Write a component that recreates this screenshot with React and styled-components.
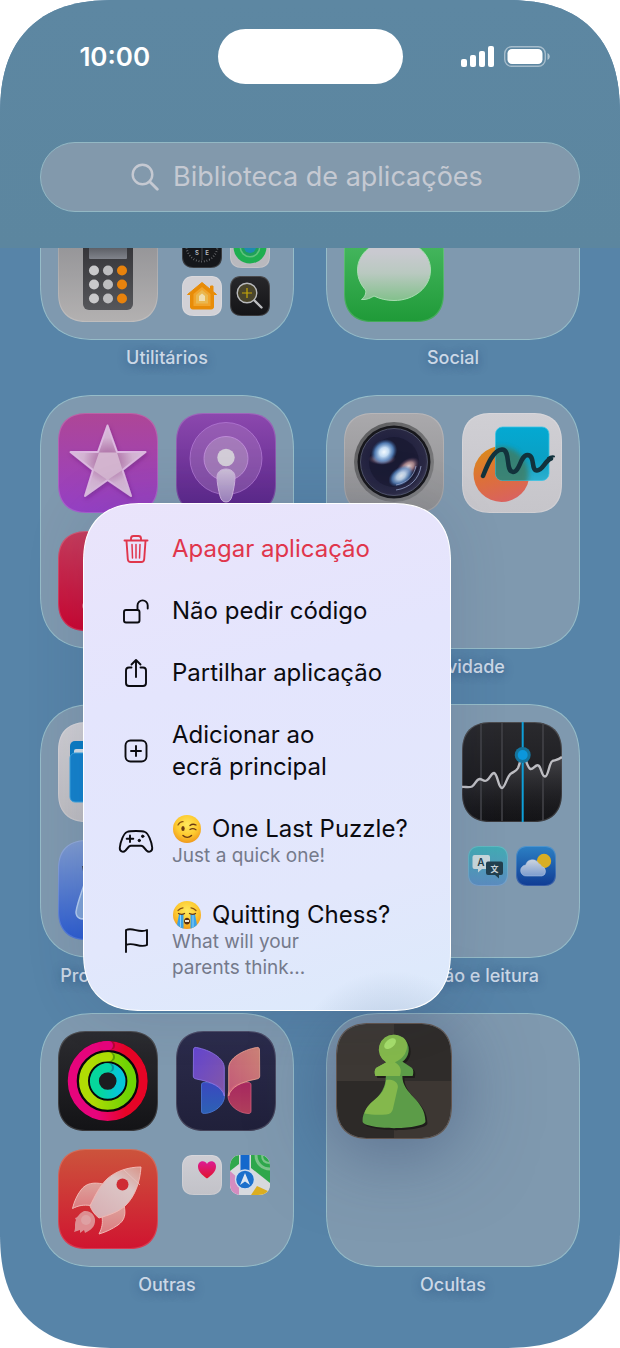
import React from "react";
import styled, { createGlobalStyle, css } from "styled-components";

const GlobalStyle = createGlobalStyle`
  * {
    box-sizing: border-box;
  }

  body {
    margin: 0;
    background: #fff;
    font-family: Inter, "Liberation Sans", sans-serif;
  }

  button {
    padding: 0;
    border: 0;
    background: none;
    color: inherit;
    font: inherit;
    text-align: left;
    cursor: pointer;
  }

  svg {
    display: block;
  }
`;

/* ---------- app icons, 100 x 100 ---------- */

const Calculator = () => (
  <svg viewBox="0 0 100 100" aria-hidden="true">
    <defs>
      <linearGradient id="calcBody" x1="0" y1="0" x2="0" y2="1">
        <stop offset="0" stopColor="#2f2f33" />
        <stop offset="1" stopColor="#55565a" />
      </linearGradient>
      <linearGradient id="calcScreen" x1="0" y1="0" x2="0" y2="1">
        <stop offset="0" stopColor="#44464c" />
        <stop offset="1" stopColor="#80838b" />
      </linearGradient>
    </defs>
    <rect x="25" y="12" width="50" height="76" rx="6" fill="url(#calcBody)" />
    <rect x="31" y="18" width="38" height="19" rx="1" fill="url(#calcScreen)" />
    {[48.5, 62.5, 76.5].map((y) => (
      <g key={y}>
        <circle cx="36" cy={y} r="5" fill="#c9c9cb" />
        <circle cx="50" cy={y} r="5" fill="#bdbdbf" />
        <circle cx="64" cy={y} r="5" fill="#e8820c" />
      </g>
    ))}
  </svg>
);

const Messages = () => (
  <svg viewBox="0 0 100 100" aria-hidden="true">
    <defs>
      <linearGradient id="bubble" x1="0" y1="0" x2="0" y2="1">
        <stop offset="0.2" stopColor="#c9c9d0" />
        <stop offset="0.55" stopColor="#b9c9c0" />
        <stop offset="1" stopColor="#83c08c" />
      </linearGradient>
    </defs>
    <path
      d="M50 18c-20 0-36.500 13-36.500 30 0 9 4 15.500 8 20 1 4-1 7-4 9.500 5 .5 9-1.500 12.500-3.500 6 3 13 4.500 20 4.500 20 0 36.500-13 36.500-30.500S70 18 50 18z"
      fill="url(#bubble)"
      stroke="#a9dcb2"
      strokeWidth="1"
    />
  </svg>
);

const Star = () => (
  <svg viewBox="0 0 100 100" aria-hidden="true">
    <defs>
      <radialGradient id="starArm" cx="0.5" cy="0.5" r="0.55">
        <stop offset="0.25" stopColor="#b47cae" />
        <stop offset="0.6" stopColor="#d3b3d2" />
        <stop offset="1" stopColor="#d9c2dc" />
      </radialGradient>
      <filter id="starShadow" x="-20%" y="-20%" width="140%" height="140%">
        <feDropShadow dx="1" dy="2" stdDeviation="2" floodColor="#5a1a6a" floodOpacity="0.4" />
      </filter>
    </defs>
    <path
      d="M49.500 12.500l9.500 26.500h28.500L64.500 57 73 83 49.500 67 27 83l8-26-22.500-18H40z"
      fill="url(#starArm)"
      stroke="#dcb8e0"
      strokeWidth="2"
      strokeLinejoin="round"
      filter="url(#starShadow)"
    />
    <path d="M41 39.500h18l5.500 17.500L49.500 67 35 57z" fill="#d4b5d0" />
  </svg>
);

const Podcasts = () => (
  <svg viewBox="0 0 100 100" aria-hidden="true">
    <defs>
      <linearGradient id="podBody" x1="0" y1="0" x2="0" y2="1">
        <stop offset="0" stopColor="#cdbfd8" />
        <stop offset="1" stopColor="#a184c0" />
      </linearGradient>
    </defs>
    <circle cx="50" cy="45.500" r="36" fill="#b07fc4" fillOpacity="0.4" stroke="#b77fd8" strokeOpacity="0.7" />
    <circle cx="50" cy="45.500" r="22" fill="#b79cc4" fillOpacity="0.5" stroke="#c795e0" strokeOpacity="0.8" />
    <path
      d="M41 64c0-5 4-8 9-8s9 3 9 8c0 6-1.500 13-3 19-1 4-3 6-6 6s-5-2-6-6c-1.500-6-3-13-3-19z"
      fill="url(#podBody)"
      stroke="#cfb2de"
    />
    <circle cx="50" cy="44.500" r="8.700" fill="#d3cdd8" />
  </svg>
);

const Music = () => (
  <svg viewBox="0 0 100 100" aria-hidden="true">
    <path
      d="M41 28l33-7v44a9.500 9.500 0 1 1-6-9V38l-21 4.500V75a11 10 0 1 1-6-9z"
      fill="#e28a9c"
      stroke="#eeb0bc"
      strokeWidth="1"
    />
  </svg>
);

const Camera = () => (
  <svg viewBox="0 0 100 100" aria-hidden="true">
    <defs>
      <linearGradient id="lensRing" x1="0" y1="0" x2="1" y2="1">
        <stop offset="0" stopColor="#5a5a5c" />
        <stop offset="1" stopColor="#838385" />
      </linearGradient>
      <radialGradient id="lens" cx="0.45" cy="0.45" r="0.6">
        <stop offset="0" stopColor="#20223c" />
        <stop offset="0.55" stopColor="#22223f" />
        <stop offset="0.85" stopColor="#2a2944" />
        <stop offset="1" stopColor="#3f3d58" />
      </radialGradient>
      <radialGradient id="glint">
        <stop offset="0" stopColor="#f4faff" />
        <stop offset="0.35" stopColor="#c4dcf4" />
        <stop offset="0.7" stopColor="#5f93d0" stopOpacity="0.8" />
        <stop offset="1" stopColor="#3667a8" stopOpacity="0" />
      </radialGradient>
      <radialGradient id="glow">
        <stop offset="0" stopColor="#f4e0dc" />
        <stop offset="0.5" stopColor="#c49a9c" stopOpacity="0.8" />
        <stop offset="1" stopColor="#5a3d60" stopOpacity="0" />
      </radialGradient>
    </defs>
    <circle cx="50" cy="49" r="40" fill="url(#lensRing)" />
    <circle cx="50" cy="49" r="36.500" fill="#17171c" />
    <circle cx="50" cy="49" r="33.500" fill="url(#lens)" stroke="#5a6076" strokeWidth="0.8" />
    <circle cx="50" cy="49" r="25" fill="#14142a" opacity="0.5" />
    <ellipse cx="38" cy="46" rx="14" ry="6" fill="url(#glow)" opacity="0.8" />
    <ellipse cx="40" cy="39" rx="14" ry="12" fill="url(#glint)" transform="rotate(-40 40 39)" />
    <ellipse cx="64" cy="54" rx="13" ry="8" fill="url(#glow)" transform="rotate(-35 64 54)" />
    <ellipse cx="57" cy="63" rx="14" ry="9" fill="url(#glint)" opacity="0.9" transform="rotate(-35 57 63)" />
    <path d="M52 77c14-2 23-11 25-24M52 72c11-2 18-9 20-19" fill="none" stroke="#a8b8e0" strokeOpacity="0.7" />
  </svg>
);

const Freeform = () => (
  <svg viewBox="0 0 100 100" aria-hidden="true">
    <defs>
      <linearGradient id="freeDot" x1="0.3" y1="0" x2="0.6" y2="1">
        <stop offset="0" stopColor="#d98a1a" />
        <stop offset="0.5" stopColor="#dd7038" />
        <stop offset="1" stopColor="#d96260" />
      </linearGradient>
      <linearGradient id="freeSquare" x1="0" y1="0" x2="0" y2="1">
        <stop offset="0" stopColor="#04a9d2" />
        <stop offset="0.6" stopColor="#0aa0c4" />
        <stop offset="1" stopColor="#2eb0cf" />
      </linearGradient>
      <clipPath id="freeOverlap">
        <rect x="33.500" y="14" width="53.500" height="53.500" rx="7" />
      </clipPath>
      <filter id="soft">
        <feGaussianBlur stdDeviation="2.5" />
      </filter>
    </defs>
    <circle cx="39.500" cy="61" r="28" fill="url(#freeDot)" />
    <rect x="33.500" y="14" width="53.500" height="53.500" rx="7" fill="url(#freeSquare)" stroke="#3cc4e4" strokeWidth="0.8" />
    <g clipPath="url(#freeOverlap)">
      <circle cx="39.500" cy="61" r="27" fill="#3f7a5e" opacity="0.8" filter="url(#soft)" />
    </g>
    <path
      d="M21 63C25 53 31 37 40 36.500c9 0 3 22 11 22.500 7 0 7-16.500 14.500-17 8 0 3 15.500 9.500 15.500 6 0 8-10 14-12"
      fill="none"
      stroke="#12323c"
      strokeWidth="4.500"
      strokeLinecap="round"
      strokeLinejoin="round"
    />
    <path d="M86 45c2-1.500 4-2 6-1.500" fill="none" stroke="#12323c" strokeWidth="2" strokeLinecap="round" />
  </svg>
);

const Files = () => (
  <svg viewBox="0 0 100 100" aria-hidden="true">
    <rect x="12" y="19" width="76" height="40" rx="5" fill="#0a7cc4" />
    <rect x="16" y="27" width="68" height="10" rx="2" fill="#d3dde6" />
    <rect x="12" y="31" width="76" height="49" rx="5" fill="#1482cc" stroke="#3aa3e0" />
  </svg>
);

const TestFlight = () => (
  <svg viewBox="0 0 100 100" aria-hidden="true">
    <path d="M24 26h10l3 20-9 2z" fill="#3b4454" />
    <path
      d="M27 42c-4 12-8 22-9 30 0 6 6 9 11 5l21-27z"
      fill="#7fa3d8"
      stroke="#b4cdf0"
      strokeWidth="1.500"
    />
    <circle cx="50" cy="50" r="9" fill="#c3d2ec" />
  </svg>
);

const Stocks = () => (
  <svg viewBox="0 0 100 100" aria-hidden="true">
    <defs>
      <linearGradient id="stockFill" x1="0" y1="0" x2="0" y2="1">
        <stop offset="0" stopColor="#56565b" />
        <stop offset="1" stopColor="#1a1a1e" stopOpacity="0" />
      </linearGradient>
    </defs>
    <path
      d="M0 65c3-.5 7 1 10-.5 3-1.500 4-7 7.500-7.500 3 0 4 3 7 1.500C28 57 29 51 32 51c4 1 4 15 8 15 3 0 5-12 9-14.500 3-2 5-2 7-5.500 2-4 3-13 5-13s4 13 7.500 14c3 .5 5-5 8-3.500 3 2 3 11 6.500 11s4-14 7.500-15.500c3-1 6-1 9.500-4V100H0z"
      fill="url(#stockFill)"
      opacity="0.7"
    />
    <path d="M19 1v98M40 1v98M81 1v98" stroke="#45454a" strokeWidth="1.500" />
    <path
      d="M0 65c3-.5 7 1 10-.5 3-1.500 4-7 7.500-7.500 3 0 4 3 7 1.500C28 57 29 51 32 51c4 1 4 15 8 15 3 0 5-12 9-14.500 3-2 5-2 7-5.500 2-4 3-13 5-13s4 13 7.500 14c3 .5 5-5 8-3.500 3 2 3 11 6.500 11s4-14 7.500-15.500c3-1 6-1 9.500-4"
      fill="none"
      stroke="#bdbdc2"
      strokeWidth="2.400"
    />
    <path d="M60.700 0v100" stroke="#0e9fd8" strokeWidth="2" />
    <circle cx="60.700" cy="33" r="8" fill="#15749c" />
    <circle cx="60.700" cy="33" r="5" fill="#0b97dc" />
  </svg>
);

const Activity = () => (
  <svg viewBox="0 0 100 100" aria-hidden="true">
    <defs>
      <linearGradient id="ringMove">
        <stop offset="0.35" stopColor="#e6047c" />
        <stop offset="0.75" stopColor="#e60426" />
      </linearGradient>
      <linearGradient id="ringExercise">
        <stop offset="0.2" stopColor="#b0dc04" />
        <stop offset="0.9" stopColor="#6ed404" />
      </linearGradient>
      <linearGradient id="ringStand">
        <stop offset="0.2" stopColor="#06d69c" />
        <stop offset="0.9" stopColor="#06c6d8" />
      </linearGradient>
    </defs>
    <circle cx="49.700" cy="50" r="40" fill="#08080a" />
    <circle cx="49.700" cy="50" r="9" fill="#1c1c20" />
    <g fill="none" strokeWidth="9">
      <circle cx="49.700" cy="50" r="35.500" stroke="url(#ringMove)" />
      <circle cx="49.700" cy="50" r="24.200" stroke="url(#ringExercise)" />
      <circle cx="49.700" cy="50" r="13.300" stroke="url(#ringStand)" />
    </g>
    <g fill="none" strokeWidth="8" strokeLinecap="round">
      <path d="M51 14.600h2" stroke="#8d0a22" strokeOpacity="0.6" />
      <path d="M51 25.900h2" stroke="#3c7a08" strokeOpacity="0.6" />
      <path d="M50 36.800h2" stroke="#0a6a88" strokeOpacity="0.6" />
    </g>
    <g fill="none" strokeWidth="9" strokeLinecap="round">
      <path d="M46 14.700c2-.2 3-.2 4.500-.2" stroke="#e6047c" />
      <path d="M46 26.100c2-.3 3-.3 4.500-.3" stroke="#aede04" />
      <path d="M48 36.800l1.500-.1" stroke="#06d6a4" />
    </g>
  </svg>
);

const Journal = () => (
  <svg viewBox="0 0 100 100" aria-hidden="true">
    <defs>
      <linearGradient id="wingA" x1="0" y1="0" x2="1" y2="1">
        <stop offset="0" stopColor="#6848dc" />
        <stop offset="1" stopColor="#8c5cae" />
      </linearGradient>
      <linearGradient id="wingB" x1="0" y1="1" x2="1" y2="0">
        <stop offset="0" stopColor="#cf5c7c" />
        <stop offset="1" stopColor="#dc8c7c" />
      </linearGradient>
      <linearGradient id="wingC" x1="0" y1="0" x2="0" y2="1">
        <stop offset="0" stopColor="#3a48c0" />
        <stop offset="1" stopColor="#2c62b4" />
      </linearGradient>
      <linearGradient id="wingD" x1="0" y1="0" x2="0" y2="1">
        <stop offset="0" stopColor="#a82860" />
        <stop offset="1" stopColor="#b0405c" />
      </linearGradient>
    </defs>
    <path d="M25.500 54c0-2 1-2.500 3-2.500 11 0 20 5 20 13.500 0 9-10 17-20 17.500-2 0-3-.5-3-2.500z" fill="url(#wingC)" stroke="#4e78d8" strokeWidth="0.800" />
    <path d="M75 54c0-2-1-2.500-3-2.500-11 0-20 5-20 13.500 0 9 10 17 20 17.500 2 0 3-.5 3-2.500z" fill="url(#wingD)" stroke="#d0607c" strokeWidth="0.800" />
    <path d="M17.500 19c0-2 1-3 3-2.500C34 19 48.300 27 48.300 37v28c-2-9-12-14-28-17-2-.5-3-1-3-3z" fill="url(#wingA)" fillOpacity="0.920" stroke="#9078ec" strokeWidth="0.800" />
    <path d="M83.500 19c0-2-1-3-3-2.500C67 19 52.700 27 52.700 37v28c2-9 12-14 28-17 2-.5 3-1 3-3z" fill="url(#wingB)" fillOpacity="0.920" stroke="#eca694" strokeWidth="0.800" />
  </svg>
);

const Rocket = () => (
  <svg viewBox="0 0 100 100" aria-hidden="true">
    <defs>
      <linearGradient id="hull" x1="0.900" y1="0" x2="0.200" y2="1">
        <stop offset="0" stopColor="#d89a90" />
        <stop offset="0.35" stopColor="#dcc6c6" />
        <stop offset="1" stopColor="#d8b0b4" />
      </linearGradient>
      <linearGradient id="fin" x1="0" y1="0" x2="0" y2="1">
        <stop offset="0" stopColor="#dda29c" />
        <stop offset="1" stopColor="#dc7c80" />
      </linearGradient>
    </defs>
    <g stroke="#f0b8b4" strokeWidth="1" strokeLinejoin="round">
      <path d="M45 35c-9-2-17-1-22 6-4 5-7 12-8.500 18.500 6-3 11-4 18-3z" fill="url(#fin)" />
      <path d="M66 56c2 9 1 15-6 20-6 4-12 7-19 9 3-6 4-11 3-17z" fill="url(#fin)" />
      <path d="M83 18c-13 0-25 4-34 12-8 8-12 17-17 27 2 5 5 9 9 12 10-3 20-6 27-13 9-9 14-23 15-38z" fill="url(#hull)" />
    </g>
    <path d="M66 21l16 15" stroke="#e4c4c0" strokeWidth="0.800" />
    <circle cx="64.500" cy="35.500" r="6" fill="#cf2c34" />
    <path
      d="M26 62c7-1 12 5 11 11-1 7-7 9-10 11l-1-3-4 3v-3l-6 2c2-4 0-8 2-12l-1-2c3 0 4-5 9-7z"
      fill="#dfa0a2"
      fillOpacity="0.850"
    />
    <circle cx="28" cy="71" r="5" fill="#e0b4b6" fillOpacity="0.500" />
  </svg>
);

/* drawn larger: this one is lifted under the menu */
const Chess = () => (
  <svg viewBox="0 0 116 116" aria-hidden="true">
    <rect width="58" height="58" fill="#3d3834" />
    <rect x="58" width="58" height="58" fill="#2f2c2a" />
    <rect y="58" width="58" height="58" fill="#2d2a28" />
    <rect x="58" y="58" width="58" height="58" fill="#3d3733" />
    <g fill="#1f1d1b" transform="translate(2 2)">
      <circle cx="58" cy="26" r="15" />
      <path d="M51 39l-11 5.500c-2 1.500-2 5-1 8.500h10.700c0 25-23.700 26-23.700 46 0 5 20 7 32 7s32-2 32-7c0-22-23.500-27-23.500-46H77c1-3.500 1-7-1-8.500L66 38z" />
    </g>
    <path
      d="M51 39l-11 5.500c-2 1.500-2 5-1 8.500h10.700c0 25-23.700 26-23.700 46 0 5 20 7 32 7s32-2 32-7c0-22-23.500-27-23.500-46H77c1-3.500 1-7-1-8.500L66 38z"
      fill="#5c9c48"
    />
    <circle cx="58" cy="26" r="15" fill="#5c9c48" />
    <path d="M58 11a15 15 0 0 0-8 28l-10 5.500c-2 1.500-2 5-1 8.500h25c2-6 1-10-5-14 15-6 16-24 5-26.500-2-1-4-1.500-6-1.500z" fill="#84b84c" />
    <path d="M50 57c3-1 12 0 12 7l-5 22c-1 4-3 6-7 6-7 .5-15 .5-22-1 4-15 20-14 22-34z" fill="#84b84c" />
    <ellipse cx="54" cy="20" rx="7" ry="4.200" fill="#a6de6c" transform="rotate(-40 54 20)" />
  </svg>
);

/* ---------- mini icons, 40 x 40 ---------- */

const Compass = () => (
  <svg viewBox="0 0 40 40" aria-hidden="true">
    <circle cx="20" cy="18" r="15.500" fill="none" stroke="#8b8d90" strokeWidth="2" strokeDasharray="0.6 2.100" />
    <path d="M20 6v26" stroke="#55585c" strokeWidth="0.800" />
    <g fill="#b8bcc0" fontFamily="Inter, sans-serif" fontSize="6" fontWeight="600" textAnchor="middle">
      <text x="15" y="27">S</text>
      <text x="25" y="27">E</text>
    </g>
  </svg>
);

const FindMy = () => (
  <svg viewBox="0 0 40 40" aria-hidden="true">
    <circle cx="20" cy="19" r="16.500" fill="#1fae50" />
    <circle cx="20" cy="19" r="10.500" fill="#5fc27c" />
    <circle cx="20" cy="19" r="9" fill="#1fa05a" />
    <circle cx="20" cy="19" r="6" fill="#1d8bb0" />
  </svg>
);

const Home = () => (
  <svg viewBox="0 0 40 40" aria-hidden="true">
    <path d="M20 6.500L5.500 18.500h3V31q0 2 2 2h19q2 0 2-2V18.500h3L31 15.500V10h-2.500v3.500z" fill="#e88c08" stroke="#e88c08" strokeLinejoin="round" />
    <path d="M20 11l-8.500 7v12h17V18z" fill="#f0a42c" />
    <path d="M20 14l-6 5v8.500h12V19z" fill="#eab850" />
    <path d="M20 17.500l-3 2.500v5h6v-5z" fill="#f0deb0" />
  </svg>
);

const Magnifier = () => (
  <svg viewBox="0 0 40 40" aria-hidden="true">
    <circle cx="17" cy="17" r="9.800" fill="#4a452c" stroke="#b8b9bc" strokeWidth="1.400" />
    <path d="M17 12v10M12 17h10" stroke="#c8a808" strokeWidth="1.200" />
    <path d="M24.500 24.500l7 7" stroke="#bcbdc0" strokeWidth="2.400" strokeLinecap="round" />
  </svg>
);

const Translate = () => (
  <svg viewBox="0 0 40 40" aria-hidden="true">
    <path d="M6.500 9H20q2 0 2 2v10q0 2-2 2h-6l-4 3.500V23H6.500q-2 0-2-2V11q0-2 2-2z" fill="#c9d8dc" />
    <path d="M20 15.500h13q2 0 2 2V27q0 2-2 2h-2v3.500L27 29h-7q-2 0-2-2v-9.500q0-2 2-2z" fill="#22404e" />
    <text x="13" y="20" fill="#24404c" fontFamily="Inter, sans-serif" fontSize="10" fontWeight="600" textAnchor="middle">A</text>
    <text x="26.500" y="25.500" fill="#c8d4da" fontFamily="'Noto Sans CJK JP', sans-serif" fontSize="8" fontWeight="700" textAnchor="middle">文</text>
  </svg>
);

const Weather = () => (
  <svg viewBox="0 0 40 40" aria-hidden="true">
    <defs>
      <linearGradient id="cloud" x1="0" y1="0" x2="0" y2="1">
        <stop offset="0" stopColor="#ccd4e0" />
        <stop offset="1" stopColor="#7c9cce" />
      </linearGradient>
    </defs>
    <circle cx="28" cy="15" r="7.200" fill="#d8ae24" />
    <path d="M10.500 30a5.500 5.500 0 0 1-.8-11 7 7 0 0 1 13-1.500 5.200 5.200 0 0 1 3 3A4.900 4.900 0 0 1 26 30z" fill="url(#cloud)" stroke="#b4c6e2" strokeWidth="0.500" />
  </svg>
);

const Health = () => (
  <svg viewBox="0 0 40 40" aria-hidden="true">
    <defs>
      <linearGradient id="heart" x1="0" y1="0" x2="0" y2="1">
        <stop offset="0" stopColor="#dc1c94" />
        <stop offset="1" stopColor="#e0142c" />
      </linearGradient>
    </defs>
    <path d="M25 23.500c-5-3.500-9-7-9-12 0-6 7-7 9-2.500 2-4.500 9-3.500 9 2.500 0 5-4 8.500-9 12z" fill="url(#heart)" />
  </svg>
);

const Maps = () => (
  <svg viewBox="0 0 40 40" aria-hidden="true">
    <rect width="40" height="40" fill="#d8dade" />
    <path d="M0 0h9v9L0 16z" fill="#2fa84c" />
    <path d="M21 0h19v28L21 13z" fill="#2fa84c" />
    <path d="M26 0c0 8 6 14 14 14" fill="none" stroke="#7cc48a" strokeWidth="3" />
    <path d="M32 0c0 5 3 8 8 8" fill="none" stroke="#7cc48a" strokeWidth="2" />
    <path d="M0 16l9 8v16H0z" fill="#d48cc0" />
    <path d="M21 40l6-9 13 6v3z" fill="#dcae20" />
    <path d="M10.500 0h9v16h-9z" fill="#1468cc" />
    <circle cx="15" cy="24.500" r="9.500" fill="#1c70cc" stroke="#d0dcec" strokeWidth="1.400" />
    <path d="M15 18l5 12-5-3.500-5 3.500z" fill="#dce6f2" />
  </svg>
);

/* ---------- menu and status drawings ---------- */

const MenuSvg = ({ children }) => (
  <svg
    width="36"
    height="36"
    viewBox="0 0 36 36"
    fill="none"
    stroke="currentColor"
    strokeWidth="1.900"
    strokeLinecap="round"
    strokeLinejoin="round"
    aria-hidden="true"
  >
    {children}
  </svg>
);

const TrashIcon = () => (
  <MenuSvg>
    <path d="M6.500 9.500h23" />
    <path d="M13 9V7.500Q13 5 15.500 5h5Q23 5 23 7.500V9" />
    <path d="M8.500 10l1.300 18.200q.2 2.800 3 2.800h10.400q2.800 0 3-2.800L27.500 10" />
    <path d="M14 13.500l.5 13.500M18 13.500V27M22 13.500L21.500 27" strokeWidth="1.500" />
  </MenuSvg>
);

const UnlockIcon = () => (
  <MenuSvg>
    <rect x="6" y="17" width="15.500" height="12.500" rx="2" />
    <path d="M19.500 16.500V12.500a5 5 0 0 1 10.200 0v3" />
  </MenuSvg>
);

const ShareIcon = () => (
  <MenuSvg>
    <path d="M13.500 12.500H11Q8 12.500 8 15.500V28q0 3 3 3h14q3 0 3-3V15.500q0-3-3-3h-2.500" />
    <path d="M18 22V5.500M13.500 9.500L18 5l4.500 4.500" />
  </MenuSvg>
);

const AddIcon = () => (
  <MenuSvg>
    <rect x="7.500" y="7.500" width="21" height="21" rx="5" />
    <path d="M18 13v10M13 18h10" />
  </MenuSvg>
);

const GamepadIcon = () => (
  <MenuSvg>
    <path d="M9 9c3-1.300 15-1.300 18 0 3.500 1.500 6.500 9.500 7.200 15.500.3 4-3.200 5.500-5.700 3L25 23.500c-.7-.6-1.200-.8-2-.8H13c-.8 0-1.300.2-2 .8l-3.500 4c-2.500 2.500-6 1-5.700-3C2.500 18.500 5.500 10.500 9 9z" />
    <path d="M12 12.500v6.500M8.700 15.700h6.600" />
    <circle cx="24.700" cy="13.300" r="1.200" fill="currentColor" strokeWidth="1" />
    <circle cx="21.300" cy="17.500" r="1.200" fill="currentColor" strokeWidth="1" />
  </MenuSvg>
);

const FlagIcon = () => (
  <MenuSvg>
    <path d="M8 30V8c7-3 13 3.500 21 0v15c-7 3.500-14-3.500-21 0" />
  </MenuSvg>
);

const WinkEmoji = () => (
  <svg width="30" height="30" viewBox="0 0 30 30" role="img" aria-label="Piscar o olho">
    <defs>
      <radialGradient id="winkFace" cx="0.5" cy="0.35" r="0.65">
        <stop offset="0" stopColor="#ffe95c" />
        <stop offset="0.6" stopColor="#fdc92f" />
        <stop offset="1" stopColor="#f09a1e" />
      </radialGradient>
    </defs>
    <circle cx="15" cy="15" r="14" fill="url(#winkFace)" />
    <ellipse cx="11" cy="14.500" rx="1.700" ry="2.500" fill="#6b3a12" />
    <path d="M6 11c1.500-2.500 3-3.500 5-3.300" fill="none" stroke="#8a5414" strokeWidth="1.300" strokeLinecap="round" />
    <path d="M18 11.500c2-1.700 4-1.500 6-.5M18 15.500c2-1.300 4-1 6 .2" fill="none" stroke="#6b3a12" strokeWidth="1.300" strokeLinecap="round" />
    <path d="M11 21.500c2.500 2.300 6 2.300 8.500 0" fill="none" stroke="#6b3a12" strokeWidth="1.500" strokeLinecap="round" />
  </svg>
);

const CryEmoji = () => (
  <svg width="30" height="30" viewBox="0 0 30 30" role="img" aria-label="A chorar muito">
    <defs>
      <radialGradient id="cryFace" cx="0.5" cy="0.35" r="0.65">
        <stop offset="0" stopColor="#ffe95c" />
        <stop offset="0.6" stopColor="#fdc92f" />
        <stop offset="1" stopColor="#f09a1e" />
      </radialGradient>
      <clipPath id="cryClip">
        <circle cx="15" cy="15" r="14" />
      </clipPath>
    </defs>
    <circle cx="15" cy="15" r="14" fill="url(#cryFace)" />
    <g clipPath="url(#cryClip)">
      <path d="M7 14h4.500v16H5V25zM18.500 14H23l2 11v5h-6.500z" fill="#3aa2e8" />
      <path d="M8.500 14v14M21 14v14" stroke="#8cd0f8" strokeWidth="1" />
    </g>
    <path d="M6 10.500C7.500 9 9 8 11 7.800M24 10.500C22.500 9 21 8 19 7.800" fill="none" stroke="#8a5414" strokeWidth="1.200" strokeLinecap="round" />
    <path d="M6.500 13.500c2 1 4.500 1 6 0M17.500 13.500c2 1 4.500 1 6 0" fill="none" stroke="#6b3a12" strokeWidth="1.300" strokeLinecap="round" />
    <path d="M12 21.500c0-5 6-5 6 0 0 4-6 4-6 0z" fill="#5a2c10" />
    <path d="M13 20h4v2h-4z" fill="#f6ead8" />
  </svg>
);

const SignalIcon = () => (
  <svg width="33" height="22" viewBox="0 0 33 22" fill="#fff" role="img" aria-label="Rede">
    <rect x="0" y="13" width="6" height="8" rx="2" />
    <rect x="9" y="9" width="6" height="12" rx="2" />
    <rect x="18" y="5" width="6" height="16" rx="2" />
    <rect x="27" y="0" width="6" height="21" rx="2" />
  </svg>
);

const BatteryIcon = () => (
  <svg width="46" height="22" viewBox="0 0 46 22" role="img" aria-label="Bateria">
    <rect x="0.700" y="0.700" width="40.600" height="19.600" rx="7" fill="none" stroke="#fff" strokeOpacity="0.450" strokeWidth="1.400" />
    <rect x="3.500" y="3" width="35" height="15" rx="4.500" fill="#fff" />
    <path d="M43.500 7c3 1.500 3 5.500 0 7z" fill="#fff" fillOpacity="0.500" />
  </svg>
);

const SearchIcon = () => (
  <svg width="28" height="28" viewBox="0 0 28 28" fill="none" stroke="currentColor" strokeWidth="2.400" strokeLinecap="round" aria-hidden="true">
    <circle cx="11.500" cy="11.500" r="9.800" />
    <path d="M18.800 18.800l7.500 7.500" strokeWidth="2.800" />
  </svg>
);

/* ---------- data ---------- */

const folders = [
  {
    label: "Utilitários",
    apps: [
      null,
      null,
      { name: "Calculadora", icon: <Calculator />, bg: "linear-gradient(#8d8d91, #b3b1b1)" },
    ],
    mini: [
      { name: "Bússola", icon: <Compass />, bg: "#15171b" },
      { name: "Encontrar", icon: <FindMy />, bg: "#b9b9be" },
      { name: "Casa", icon: <Home />, bg: "#d2d1d6" },
      { name: "Lupa", icon: <Magnifier />, bg: "linear-gradient(#28282b, #141417)" },
    ],
  },
  {
    label: "Social",
    apps: [null, null, { name: "Mensagens", icon: <Messages />, bg: "linear-gradient(#4fbe68, #1f9a38)" }],
  },
  {
    // the open menu lies over this folder's name
    label: "",
    apps: [
      { name: "iTunes Store", icon: <Star />, bg: "linear-gradient(#ae4696, #9640c6)" },
      { name: "Podcasts", icon: <Podcasts />, bg: "linear-gradient(#8c48ae, #582488)" },
      { name: "Música", icon: <Music />, bg: "linear-gradient(#c63c5c, #cc0430)" },
    ],
  },
  {
    label: "Criatividade",
    apps: [
      { name: "Câmara", icon: <Camera />, bg: "linear-gradient(#aaa9ac, #8f8f91)" },
      { name: "Freeform", icon: <Freeform />, bg: "linear-gradient(#d0cfd4, #c6c5ca)" },
    ],
  },
  {
    label: "Produtividade e finanças",
    apps: [
      { name: "Ficheiros", icon: <Files />, bg: "linear-gradient(#cfced3, #bdbcc0)" },
      null,
      { name: "TestFlight", icon: <TestFlight />, bg: "linear-gradient(#809cd0, #2c5cd0)" },
    ],
  },
  {
    label: "Informação e leitura",
    apps: [null, { name: "Bolsa", icon: <Stocks />, bg: "linear-gradient(#2a2a2e, #141417)" }, null],
    mini: [
      { name: "Traduzir", icon: <Translate />, bg: "linear-gradient(#42acb4, #5c8cc0)" },
      { name: "Meteorologia", icon: <Weather />, bg: "linear-gradient(#2c80c4, #103c94)" },
    ],
  },
  {
    label: "Outras",
    apps: [
      { name: "Atividade", icon: <Activity />, bg: "linear-gradient(#2c2c30, #131316)" },
      { name: "Diário", icon: <Journal />, bg: "linear-gradient(#2c2c4c, #20203a)" },
      { name: "Foguetão", icon: <Rocket />, bg: "linear-gradient(#cc543c, #d01430)" },
    ],
    mini: [
      { name: "Saúde", icon: <Health />, bg: "linear-gradient(#cfced4, #c2c2c8)" },
      { name: "Mapas", icon: <Maps />, bg: "#d8dade" },
    ],
  },
];

const menuItems = [
  { icon: <TrashIcon />, title: "Apagar aplicação", danger: true },
  { icon: <UnlockIcon />, title: "Não pedir código" },
  { icon: <ShareIcon />, title: "Partilhar aplicação" },
  { icon: <AddIcon />, title: <>Adicionar ao<br />ecrã principal</> },
  { icon: <GamepadIcon />, emoji: <WinkEmoji />, title: "One Last Puzzle?", note: "Just a quick one!" },
  { icon: <FlagIcon />, emoji: <CryEmoji />, title: "Quitting Chess?", note: <>What will your<br />parents think...</> },
];

const Folder = ({ folder }) => (
  <FolderCell>
    <FolderCard>
      {folder.apps.map((app, i) =>
        app ? (
          <AppButton key={i} $bg={app.bg} aria-label={app.name}>
            {app.icon}
          </AppButton>
        ) : (
          <span key={i} />
        )
      )}
      {folder.mini && (
        <MiniGrid>
          {folder.mini.map((app) => (
            <MiniButton key={app.name} $bg={app.bg} aria-label={app.name}>
              {app.icon}
            </MiniButton>
          ))}
        </MiniGrid>
      )}
    </FolderCard>
    <FolderLabel>{folder.label}</FolderLabel>
  </FolderCell>
);

const ContextMenu = () => (
  <Menu role="menu">
    {menuItems.map((item, i) => (
      <MenuItem key={i} role="menuitem" $danger={item.danger}>
        {item.icon}
        <MenuText>
          <MenuTitle>
            {item.emoji}
            <span>{item.title}</span>
          </MenuTitle>
          {item.note && <MenuNote>{item.note}</MenuNote>}
        </MenuText>
      </MenuItem>
    ))}
  </Menu>
);

const App = () => {
  return (
    <>
      <GlobalStyle />
      <Screen>
        <Header>
          <StatusBar>
            <Clock>10:00</Clock>
            <Island />
            <StatusIcons>
              <SignalIcon />
              <BatteryIcon />
            </StatusIcons>
          </StatusBar>
          <SearchBar>
            <SearchIcon />
            <SearchInput type="text" placeholder="Biblioteca de aplicações" aria-label="Biblioteca de aplicações" />
          </SearchBar>
        </Header>
        <Library>
          {folders.map((folder, i) => (
            <Folder key={i} folder={folder} />
          ))}
          <FolderCell>
            <FolderCard>
              <LiftedSlot>
                <LiftedButton aria-label="Chess">
                  <Chess />
                </LiftedButton>
                <ContextMenu />
              </LiftedSlot>
            </FolderCard>
            <FolderLabel>Ocultas</FolderLabel>
          </FolderCell>
        </Library>
      </Screen>
    </>
  );
};

/* rounder than a plain arc, as the corners of the phone are */
const squircle = css`
  corner-shape: superellipse(1.3);
`;

const Screen = styled.main`
  position: relative;
  overflow: hidden;
  border-radius: 116px;
  background: #5784a8;
  ${squircle}
`;

const Header = styled.header`
  position: relative;
  z-index: 2;
  padding: 29px 40px 36px;
  background: linear-gradient(#5d87a2, #5c869f);
`;

const StatusBar = styled.div`
  display: grid;
  grid-template-columns: 1fr 185px 1fr;
  align-items: center;
  margin: 0 -28px 58px;
`;

const Clock = styled.time`
  color: #fff;
  font-size: 26px;
  font-weight: 600;
  line-height: 32px;
  text-align: center;
`;

const Island = styled.div`
  height: 55px;
  border-radius: 28px;
  background: #fff;
`;

const StatusIcons = styled.div`
  display: flex;
  justify-content: center;
  gap: 10px;
`;

const SearchBar = styled.label`
  display: flex;
  align-items: center;
  justify-content: center;
  gap: 14px;
  height: 70px;
  border: 1px solid #93b8c4;
  border-radius: 35px;
  background: #8299ac;
  color: #c5c9d2;
`;

const SearchInput = styled.input`
  width: 316px;
  padding: 0;
  border: 0;
  outline: 0;
  background: none;
  color: inherit;
  font: 400 27px/36px Inter, "Liberation Sans", sans-serif;

  &::placeholder {
    color: inherit;
    opacity: 1;
  }
`;

const Library = styled.section`
  display: grid;
  grid-template-columns: 1fr 1fr;
  gap: 19px 32px;
  margin-top: -162px;
  padding: 0 40px 45px;
`;

const FolderCell = styled.div`
  min-width: 0;
`;

const FolderCard = styled.div`
  display: grid;
  grid-template-columns: 1fr 1fr;
  grid-template-rows: 1fr 1fr;
  gap: 18px;
  aspect-ratio: 1;
  padding: 17px;
  border: 1px solid #96bcc8;
  border-radius: 56px;
  background: #7f99af;
  ${squircle}
`;

const FolderLabel = styled.div`
  min-height: 36px;
  color: #ccd8e6;
  font-size: 18px;
  font-weight: 500;
  line-height: 36px;
  text-align: center;
  white-space: nowrap;
  text-shadow: 0 2px 8px rgba(30, 60, 110, 0.5);
`;

const AppButton = styled.button`
  overflow: hidden;
  aspect-ratio: 1;
  border-radius: 30px;
  background: ${(props) => props.$bg};
  box-shadow: inset 0 0 0 1px rgba(255, 255, 255, 0.16);
  ${squircle}
`;

const MiniGrid = styled.div`
  display: grid;
  grid-template-columns: 1fr 1fr;
  grid-template-rows: 1fr 1fr;
  gap: 8px;
  padding: 6px;
`;

const MiniButton = styled(AppButton)`
  border-radius: 12px;
`;

const LiftedSlot = styled.div`
  position: relative;
  margin: -8px;
`;

const LiftedButton = styled(AppButton)`
  display: block;
  width: 100%;
  border: 1px solid #62544d;
  border-radius: 34px;
  box-shadow: 0 10px 80px rgba(50, 65, 105, 0.55);
`;

const Menu = styled.div`
  position: absolute;
  right: 1px;
  bottom: calc(100% + 12px);
  z-index: 1;
  width: 368px;
  padding: 14px 0;
  border: 1px solid #fff;
  border-radius: 60px;
  background:
    radial-gradient(circle at 84% 112%, rgba(160, 180, 208, 0.8), rgba(190, 205, 228, 0) 100px),
    linear-gradient(165deg, #eae4fb 0%, #e4e5fd 35%, #e2e7fc 75%, #dceafb 100%);
  box-shadow: 0 0 60px rgba(40, 60, 100, 0.14);
  ${squircle}
`;

const MenuItem = styled.button`
  display: flex;
  align-items: center;
  gap: 18px;
  width: 100%;
  padding: 15px 34px;
  color: ${(props) => (props.$danger ? "#e0364c" : "#0b0b10")};

  > svg {
    flex: none;
    margin: -2px 0;
  }
`;

const MenuText = styled.span`
  display: block;
  white-space: nowrap;
`;

const MenuTitle = styled.span`
  display: flex;
  align-items: center;
  gap: 10px;
  font-size: 24px;
  line-height: 32px;
`;

const MenuNote = styled.span`
  display: block;
  margin-top: -2px;
  color: #757a8b;
  font-size: 19px;
  line-height: 26px;
`;

export default App;
